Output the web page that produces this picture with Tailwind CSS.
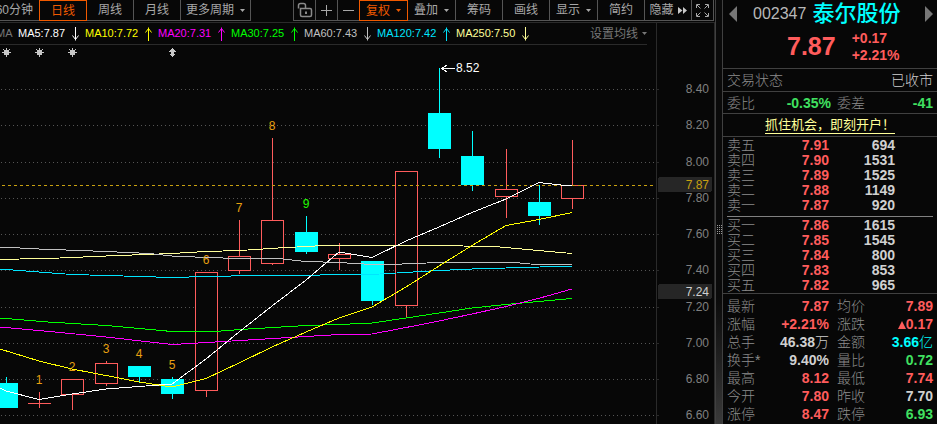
<!DOCTYPE html>
<html lang="zh-CN">

<head>
    <meta charset="UTF-8">
    <meta name="viewport" content="width=device-width, initial-scale=1.0">
    <title>泰尔股份 002347</title>
    <script src="https://cdn.jsdelivr.net/npm/@tailwindcss/browser@4"></script>
</head>

<body class="bg-[#070707] font-['Liberation_Sans','Noto_Sans_CJK_SC',sans-serif] overflow-hidden">
    <main class="flex min-h-screen">
        <section class="flex-1 min-w-0">
            <!-- Toolbar -->
            <nav class="flex h-[21px] text-xs text-[#a8a8a8] whitespace-nowrap">
                <button class="w-[39px] flex items-center justify-end pr-1.5 overflow-hidden border-b border-[#555]">60分钟</button>
                <button class="w-12 border border-[#f05a00] text-[#f05a00]">日线</button>
                <button class="w-[47px] border-r border-b border-[#555]">周线</button>
                <button class="w-[47px] border-r border-b border-[#555]">月线</button>
                <button class="w-[70px] flex items-center justify-center gap-1.5 border-r border-b border-[#555]">更多周期
                    <svg class="w-[5px] h-[3px]" viewBox="0 0 5 3" fill="currentColor"><path d="M0 0h5L2.500 3z" /></svg>
                </button>
                <div class="flex-1"></div>
                <button class="w-[23px] flex items-center justify-center border-x border-b border-[#555]" aria-label="解锁">
                    <svg class="w-4 h-4" viewBox="0 0 16 16" fill="none" stroke="#8a8a8a">
                        <path d="M1.500 6.500V3.500Q1.500 1.500 3.500 1.500H6.500Q8.500 1.500 8.500 3.500V6.500" stroke-width="1.500" />
                        <path d="M3.500 6.500H13Q14.500 6.500 14.500 8V13Q14.500 14.500 13 14.500H5Q3.500 14.500 3.500 13Z" stroke-width="1.500" />
                        <path d="M9 9.500V12" stroke-width="2" />
                    </svg>
                </button>
                <button class="w-[22px] flex items-center justify-center border-r border-b border-[#555]" aria-label="放大">
                    <svg class="w-[11px] h-[11px]" viewBox="0 0 11 11" stroke="currentColor"><path d="M0 5.500H11M5.500 0V11" /></svg>
                </button>
                <button class="w-[21px] flex items-center justify-center border-b border-[#555]" aria-label="缩小">
                    <svg class="w-[11px] h-[11px]" viewBox="0 0 11 11" stroke="currentColor"><path d="M0 5.500H11" /></svg>
                </button>
                <button class="w-[49px] flex items-center justify-center gap-1.5 border border-[#f05a00] text-[#f05a00]">复权
                    <svg class="w-[5px] h-[3px]" viewBox="0 0 5 3" fill="currentColor"><path d="M0 0h5L2.500 3z" /></svg>
                </button>
                <button class="w-12 flex items-center justify-center gap-1.5 border-r border-b border-[#555]">叠加
                    <svg class="w-[5px] h-[3px]" viewBox="0 0 5 3" fill="currentColor"><path d="M0 0h5L2.500 3z" /></svg>
                </button>
                <button class="w-[47px] border-r border-b border-[#555]">筹码</button>
                <button class="w-[47px] border-r border-b border-[#555]">画线</button>
                <button class="w-12 flex items-center justify-center gap-1.5 border-r border-b border-[#555]">显示
                    <svg class="w-[5px] h-[3px]" viewBox="0 0 5 3" fill="currentColor"><path d="M0 0h5L2.500 3z" /></svg>
                </button>
                <button class="w-[47px] border-r border-b border-[#555]">简约</button>
                <button class="w-[47px] flex items-center justify-center gap-1 border-r border-b border-[#555]">隐藏
                    <svg class="w-[9px] h-[7px]" viewBox="0 0 9 7" fill="#c8c8c8"><path d="M0 0L4.500 3.500L0 7zM5 0L9 3.500L5 7z" /></svg>
                </button>
                <button class="w-[22px] flex items-center justify-center border-r border-b border-[#555]" aria-label="全屏">
                    <svg class="w-[13px] h-[13px]" viewBox="0 0 13 13" fill="none" stroke="currentColor">
                        <path d="M0.500 4V0.500H4M9 0.500H12.500V4M12.500 9V12.500H9M4 12.500H0.500V9M1 1L4.500 4.500M12 1L8.500 4.500M12 12L8.500 8.500M1 12L4.500 8.500" />
                    </svg>
                </button>
                <div class="w-px"></div>
            </nav>

            <!-- Moving averages -->
            <div class="flex h-6 pt-px">
                <div class="flex-1 flex border-t border-[#2a2a2a]">
                    <div class="flex-1 flex items-center mr-[9px] border-b border-[#2a2a2a] text-[11px] whitespace-nowrap">
                        <span class="w-[18px] text-[#777] -indent-1">MA</span>
                        <span class="w-[67px] flex items-center justify-between pr-1.5 text-white">MA5:7.87
                            <svg class="w-[7px] h-3.5" viewBox="0 0 7 14" fill="none" stroke="currentColor"><path d="M3.500 0V13.500M0.500 8.500L3.500 12.500L6.500 8.500" /></svg>
                        </span>
                        <span class="w-[73px] flex items-center justify-between pr-1.5 text-[#ffff00]">MA10:7.72
                            <svg class="w-[7px] h-3.5" viewBox="0 0 7 14" fill="none" stroke="currentColor"><path d="M3.500 14V0.500M0.500 5.500L3.500 1.500L6.500 5.500" /></svg>
                        </span>
                        <span class="w-[73px] flex items-center justify-between pr-1.5 text-[#ff00ff]">MA20:7.31
                            <svg class="w-[7px] h-3.5" viewBox="0 0 7 14" fill="none" stroke="currentColor"><path d="M3.500 14V0.500M0.500 5.500L3.500 1.500L6.500 5.500" /></svg>
                        </span>
                        <span class="w-[73px] flex items-center justify-between pr-1.5 text-[#00ff00]">MA30:7.25
                            <svg class="w-[7px] h-3.5" viewBox="0 0 7 14" fill="none" stroke="currentColor"><path d="M3.500 14V0.500M0.500 5.500L3.500 1.500L6.500 5.500" /></svg>
                        </span>
                        <span class="w-[73px] flex items-center justify-between pr-1.5 text-[#c0c0c0]">MA60:7.43
                            <svg class="w-[7px] h-3.5" viewBox="0 0 7 14" fill="none" stroke="currentColor"><path d="M3.500 0V13.500M0.500 8.500L3.500 12.500L6.500 8.500" /></svg>
                        </span>
                        <span class="w-[79px] flex items-center justify-between pr-1.5 text-[#00e5ff]">MA120:7.42
                            <svg class="w-[7px] h-3.5" viewBox="0 0 7 14" fill="none" stroke="currentColor"><path d="M3.500 14V0.500M0.500 5.500L3.500 1.500L6.500 5.500" /></svg>
                        </span>
                        <span class="w-[79px] flex items-center justify-between pr-1.5 text-[#ffff99]">MA250:7.50
                            <svg class="w-[7px] h-3.5" viewBox="0 0 7 14" fill="none" stroke="currentColor"><path d="M3.500 0V13.500M0.500 8.500L3.500 12.500L6.500 8.500" /></svg>
                        </span>
                        <button class="ml-auto flex items-center gap-1 text-xs text-[#777]">设置均线
                            <svg class="w-[5px] h-[3px]" viewBox="0 0 5 3" fill="currentColor"><path d="M0 0h5L2.500 3z" /></svg>
                        </button>
                    </div>
                    <div class="w-[59px] border-x border-[#2a2a2a]"></div>
                </div>
            </div>

            <!-- K-line chart -->
            <svg class="block w-full h-auto" viewBox="0 45 715 379" fill="none" font-size="12" shape-rendering="crispEdges">
                <g stroke="#555" stroke-dasharray="1 3">
                    <path d="M1 89.500H656" />
                    <path d="M1 125.500H656" />
                    <path d="M1 162.500H656" />
                    <path d="M1 198.500H656" />
                    <path d="M1 234.500H656" />
                    <path d="M1 270.500H656" />
                    <path d="M1 307.500H656" />
                    <path d="M1 343.500H656" />
                    <path d="M1 379.500H656" />
                    <path d="M1 415.500H656" />
                </g>
                <path d="M656.500 45V424M656 89.500h3M656 125.500h3M656 162.500h3M656 198.500h3M656 234.500h3M656 270.500h3M656 307.500h3M656 343.500h3M656 379.500h3M656 415.500h3M714.500 45V424" stroke="#2a2a2a" />

                <!-- event markers -->
                <g stroke="#c8c8c8" fill="#c8c8c8">
                    <path d="M6.500 48v9M2 52.500h9M3.500 49.500l6 6M9.500 49.500l-6 6M4.500 50.500h4v4h-4z" />
                    <path d="M39.500 48v9M35 52.500h9M36.500 49.500l6 6M42.500 49.500l-6 6M37.500 50.500h4v4h-4z" />
                    <path d="M72.500 48v9M68 52.500h9M69.500 49.500l6 6M75.500 49.500l-6 6M70.500 50.500h4v4h-4z" />
                    <path d="M172.500 48.500l2 2.500h-1v3h1l-2 2.500l-2-2.500h1v-3h-1z" />
                </g>

                <!-- rising candles -->
                <g stroke="#ff5c5c" fill="#070707">
                    <path d="M39.500 392V408M28 403.500H51" />
                    <path d="M72.500 395V410M61.500 379.500h22v15h-22z" />
                    <path d="M106.500 361V363M106.500 384V386M95.500 363.500h22v20h-22z" />
                    <path d="M206.500 391V397M195.500 272.500h22v118h-22z" />
                    <path d="M239.500 220V256M239.500 271V274M228.500 256.500h22v14h-22z" />
                    <path d="M272.500 138V220M272.500 264V265M261.500 220.500h22v43h-22z" />
                    <path d="M339.500 243V254M339.500 259V270M328.500 254.500h22v4h-22z" />
                    <path d="M406.500 306V318M395.500 171.500h22v134h-22z" />
                    <path d="M506.500 149V189M506.500 197V218M495.500 189.500h22v7h-22z" />
                    <path d="M572.500 140V185M572.500 199V209M561.500 185.500h22v13h-22z" />
                </g>
                <!-- falling candles -->
                <g stroke="#00ffff" fill="#00ffff">
                    <path d="M6.500 377V383M-4.500 383.500h22v24h-22z" />
                    <path d="M139.500 377V383M128.500 366.500h22v10h-22z" />
                    <path d="M172.500 377V399M161.500 379.500h22v14h-22z" />
                    <path d="M306.500 216V254M295.500 232.500h22v19h-22z" />
                    <path d="M372.500 301V305M361.500 261.500h22v39h-22z" />
                    <path d="M439.500 68V158M428.500 113.500h22v35h-22z" />
                    <path d="M472.500 131V191M461.500 156.500h22v28h-22z" />
                    <path d="M539.500 185V225M528.500 202.500h22v13h-22z" />
                </g>

                <path d="M2 185.500H654" stroke="#c8a010" stroke-dasharray="3 3" />

                <!-- average lines -->
                <polyline stroke="#ffff99" points="0,259.500 60,258 106,256 172,253.500 206,251.500 240,250.500 278,248 306,246.500 325,245.500 445,245.500 500,247 572,253.500" />
                <polyline stroke="#c0c0c0" points="0,247 39,249 106,251.500 150,253.500 172,256 206,257.500 239,258.500 278,258.500 306,261.500 339,262.500 372,264.500 390,264.500 439,262.500 515,262.500 530,264 572,264.500" />
                <polyline stroke="#00e5ff" points="0,269 39,272 72,274.500 140,276.500 172,277.500 206,276.500 256,275.500 320,275 380,274 405,272.500 439,270.500 472,269 506,268 540,267 572,266.500" />
                <polyline stroke="#00ff00" points="0,318 48,322 106,325.500 172,331.500 215,331.500 240,329.500 306,325.500 339,324.500 372,323 406,318 439,313 472,308 506,304.500 572,298.500" />
                <polyline stroke="#ff00ff" points="0,327 55,332 106,337 172,344.500 190,343.500 240,340.500 306,336.500 339,334.500 372,334 406,327.500 439,321 472,314 506,306.500 520,303 540,298 572,289" />
                <polyline stroke="#ffff00" points="0,349 39,361 72,369 106,375.500 139,382 172,387 206,378.500 239,363 272,347 306,332 339,318 372,307 406,287 439,266 472,245.500 506,225.500 539,219.500 572,212.500" />
                <polyline stroke="#ffffff" points="0,388 6,391 39,399.500 72,394 106,389 139,386.500 172,384 206,359 239,332 272,306 306,280 339,252 372,257.500 406,241 439,227 472,212.500 506,199 539,182.500 561,185 572,185" />

                <g fill="#e8a010" text-anchor="middle">
                    <text x="39" y="384">1</text>
                    <text x="72" y="371">2</text>
                    <text x="106" y="353">3</text>
                    <text x="139" y="358">4</text>
                    <text x="172" y="369">5</text>
                    <text x="206" y="264">6</text>
                    <text x="239" y="212">7</text>
                    <text x="272" y="130">8</text>
                    <text x="306" y="208" fill="#22ff00">9</text>
                </g>

                <path d="M441 68.500H455M447 65L441.500 68.500L447 72" stroke="#fff" />
                <text x="456" y="72" fill="#fff">8.52</text>

                <!-- price axis -->
                <g fill="#808080" text-anchor="end">
                    <text x="709" y="93">8.40</text>
                    <text x="709" y="129">8.20</text>
                    <text x="709" y="166">8.00</text>
                    <text x="709" y="202">7.80</text>
                    <text x="709" y="238">7.60</text>
                    <text x="709" y="274">7.40</text>
                    <text x="709" y="311">7.20</text>
                    <text x="709" y="347">7.00</text>
                    <text x="709" y="383">6.80</text>
                    <text x="709" y="419">6.60</text>
                </g>
                <rect x="658" y="177" width="54" height="15" rx="2" fill="#262626" />
                <text x="709" y="189" fill="#c8a010" text-anchor="end">7.87</text>
                <rect x="658" y="284" width="54" height="15" rx="2" fill="#262626" />
                <text x="709" y="296" fill="#d0d0d0" text-anchor="end">7.24</text>
            </svg>
        </section>

        <!-- Splitter -->
        <div class="w-2 flex justify-center items-start pt-[225px] border-x border-[#404040] bg-linear-to-b from-[#0a0a0a] from-70% to-[#3a3a3a]">
            <svg class="w-[5px] h-[9px]" viewBox="0 0 5 9" fill="none" stroke="#999" stroke-dasharray="1 1"><path d="M0.500 0V9M2.500 0V9M4.500 0V9" /></svg>
        </div>

        <!-- Quote panel -->
        <aside class="w-[214px] text-sm whitespace-nowrap text-[#8c8c8c]">
            <header class="h-[69px] border-b border-[#404040]">
                <div class="flex items-center h-7 pl-1.5 pr-1">
                    <button aria-label="上一只"><svg class="w-2 h-4" viewBox="0 0 8 16" fill="#777"><path d="M8 0V16L0 8z" /></svg></button>
                    <h1 class="flex-1 flex items-center gap-1.5 pl-4"><span class="text-base text-[#b8b8b8]">002347</span><span class="text-[22px] leading-7 font-medium text-[#00ffff]">泰尔股份</span></h1>
                    <button aria-label="下一只"><svg class="w-2 h-4" viewBox="0 0 8 16" fill="#777"><path d="M0 0V16L8 8z" /></svg></button>
                </div>
                <div class="flex items-center gap-4 pl-16 font-bold text-[#ff5c5c]">
                    <strong class="text-[25px] leading-8">7.87</strong>
                    <div class="pt-0.5 leading-[17px]">
                        <p>+0.17</p>
                        <p>+2.21%</p>
                    </div>
                </div>
            </header>
            <div class="flex items-center justify-between h-[23px] pl-1 pr-1 border-b border-[#404040]">
                <span class="font-light">交易状态</span><span class="text-[#d0d0d0] font-light">已收市</span>
            </div>
            <div class="flex items-center h-[22px] pl-1 pr-1 border-b border-[#404040]">
                <span class="font-light">委比</span>
                <span class="flex-1 pr-1.5 text-right font-bold text-[#40e060]">-0.35%</span>
                <span class="font-light">委差</span>
                <span class="w-[68px] text-right font-bold text-[#40e060]">-41</span>
            </div>
            <div class="flex items-center justify-center h-[23px] border-b border-[#404040]">
                <a href="#" class="text-[13px] leading-4 text-[#ffff99] border-b border-[#ffff99]">抓住机会，即刻开户！</a>
            </div>

            <div class="pl-1 pr-1 border-b border-[#404040]">
                <table class="w-full mt-px leading-[15px]">
                    <tbody class="border-b border-[#808080]">
                        <tr><th class="w-8 p-0 text-left font-light">卖五</th><td class="p-0 text-right font-bold text-[#ff5c5c]">7.91</td><td class="w-[66px] p-0 text-right font-bold text-[#d0d0d0]">694</td><td class="w-[38px] p-0"></td></tr>
                        <tr><th class="p-0 text-left font-light">卖四</th><td class="p-0 text-right font-bold text-[#ff5c5c]">7.90</td><td class="p-0 text-right font-bold text-[#d0d0d0]">1531</td><td></td></tr>
                        <tr><th class="p-0 text-left font-light">卖三</th><td class="p-0 text-right font-bold text-[#ff5c5c]">7.89</td><td class="p-0 text-right font-bold text-[#d0d0d0]">1525</td><td></td></tr>
                        <tr><th class="p-0 text-left font-light">卖二</th><td class="p-0 text-right font-bold text-[#ff5c5c]">7.88</td><td class="p-0 text-right font-bold text-[#d0d0d0]">1149</td><td></td></tr>
                        <tr><th class="p-0 pb-[3px] text-left font-light">卖一</th><td class="p-0 pb-[3px] text-right font-bold text-[#ff5c5c]">7.87</td><td class="p-0 pb-[3px] text-right font-bold text-[#d0d0d0]">920</td><td></td></tr>
                    </tbody>
                    <tbody>
                        <tr><th class="p-0 pt-px text-left font-light">买一</th><td class="p-0 pt-px text-right font-bold text-[#ff5c5c]">7.86</td><td class="p-0 pt-px text-right font-bold text-[#d0d0d0]">1615</td><td></td></tr>
                        <tr><th class="p-0 text-left font-light">买二</th><td class="p-0 text-right font-bold text-[#ff5c5c]">7.85</td><td class="p-0 text-right font-bold text-[#d0d0d0]">1545</td><td></td></tr>
                        <tr><th class="p-0 text-left font-light">买三</th><td class="p-0 text-right font-bold text-[#ff5c5c]">7.84</td><td class="p-0 text-right font-bold text-[#d0d0d0]">800</td><td></td></tr>
                        <tr><th class="p-0 text-left font-light">买四</th><td class="p-0 text-right font-bold text-[#ff5c5c]">7.83</td><td class="p-0 text-right font-bold text-[#d0d0d0]">853</td><td></td></tr>
                        <tr><th class="p-0 text-left font-light">买五</th><td class="p-0 text-right font-bold text-[#ff5c5c]">7.82</td><td class="p-0 text-right font-bold text-[#d0d0d0]">965</td><td></td></tr>
                    </tbody>
                </table>
            </div>

            <div class="pl-1 pr-1 pt-[3px]">
                <table class="w-full leading-[18px]">
                    <tbody>
                        <tr><th class="w-9 p-0 text-left font-light">最新</th><td class="p-0 text-right font-bold text-[#ff5c5c]">7.87</td><th class="w-9 p-0 pl-2 text-left font-light">均价</th><td class="w-[68px] p-0 text-right font-bold text-[#ff5c5c]">7.89</td></tr>
                        <tr><th class="p-0 text-left font-light">涨幅</th><td class="p-0 text-right font-bold text-[#ff5c5c]">+2.21%</td><th class="p-0 pl-2 text-left font-light">涨跌</th><td class="p-0 text-right font-bold text-[#ff5c5c]"><svg class="inline w-2 h-2 align-baseline" viewBox="0 0 8 8" fill="currentColor"><path d="M4 0L8 8H0z" /></svg>0.17</td></tr>
                        <tr><th class="p-0 text-left font-light">总手</th><td class="p-0 text-right font-bold text-[#d0d0d0]">46.38<span class="font-light">万</span></td><th class="p-0 pl-2 text-left font-light">金额</th><td class="p-0 text-right font-bold text-[#00ffff]">3.66<span class="font-light">亿</span></td></tr>
                        <tr><th class="p-0 text-left font-light">换手*</th><td class="p-0 text-right font-bold text-[#d0d0d0]">9.40%</td><th class="p-0 pl-2 text-left font-light">量比</th><td class="p-0 text-right font-bold text-[#40e060]">0.72</td></tr>
                        <tr><th class="p-0 text-left font-light">最高</th><td class="p-0 text-right font-bold text-[#ff5c5c]">8.12</td><th class="p-0 pl-2 text-left font-light">最低</th><td class="p-0 text-right font-bold text-[#ff5c5c]">7.74</td></tr>
                        <tr><th class="p-0 text-left font-light">今开</th><td class="p-0 text-right font-bold text-[#ff5c5c]">7.80</td><th class="p-0 pl-2 text-left font-light">昨收</th><td class="p-0 text-right font-bold text-[#d0d0d0]">7.70</td></tr>
                        <tr><th class="p-0 text-left font-light">涨停</th><td class="p-0 text-right font-bold text-[#ff5c5c]">8.47</td><th class="p-0 pl-2 text-left font-light">跌停</th><td class="p-0 text-right font-bold text-[#40e060]">6.93</td></tr>
                    </tbody>
                </table>
            </div>
        </aside>
    </main>
</body>

</html>
